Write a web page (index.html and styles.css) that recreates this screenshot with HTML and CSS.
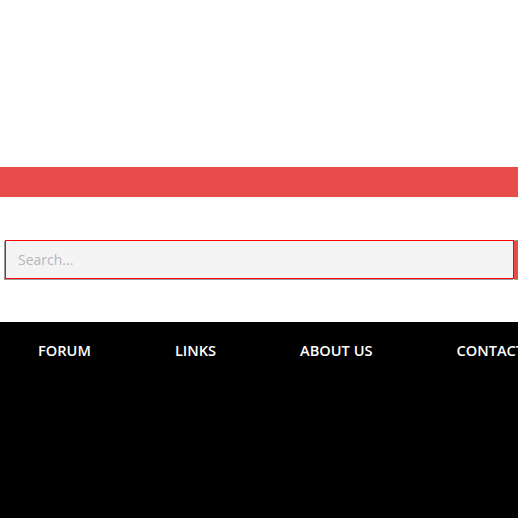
FILE: index.html
```html
<!DOCTYPE html>
<html>
<head>
<meta charset="utf-8">
<link rel="stylesheet" href="styles.css">
</head>
<body>
<header class="top"></header>
<div class="bar"></div>
<section class="search-area">
  <form class="search">
    <input class="search-input" type="text" placeholder="Search...">
    <button class="search-btn" type="button"></button>
  </form>
</section>
<footer class="footer">
  <nav class="nav">
    <a class="nav-link" href="#">FORUM</a>
    <a class="nav-link" href="#">LINKS</a>
    <a class="nav-link" href="#">ABOUT US</a>
    <a class="nav-link" href="#">CONTACT</a>
  </nav>
</footer>
</body>
</html>
```

FILE: styles.css
```css
html, body {
  margin: 0;
  padding: 0;
  background: #ffffff;
  overflow: hidden;
  font-family: "Open Sans", "Noto Sans", sans-serif;
}
.top {
  height: 167px;
}
.bar {
  height: 30px;
  background: #e84c4a;
}
.search-area {
  padding: 43px 0 42px 5px;
  height: 40px;
}
.search {
  display: flex;
  margin: 0;
}
.search-input {
  box-sizing: border-box;
  flex: 0 0 509px;
  height: 39px;
  margin: 0;
  border: 1px solid #ff0000;
  background: #f4f4f4;
  box-shadow: -1px 1px 0 #9a9a9a;
  padding: 0 0 0 12px;
  font-family: "Open Sans", "Noto Sans", sans-serif;
  font-size: 14px;
  outline: none;
}
.search-input::placeholder {
  color: #b4b6be;
}
.search-btn {
  box-sizing: border-box;
  flex: 0 0 4px;
  height: 40px;
  margin: 0;
  padding: 0;
  border: 0;
  border-top: 1px solid #9a9a9a;
  border-bottom: 1px solid #9a9a9a;
  background: #e84c4a;
}
.footer {
  height: 196px;
  background: #000000;
}
.nav {
  display: flex;
  gap: 84px;
  padding: 17px 0 0 38px;
  white-space: nowrap;
  overflow: hidden;
}
.nav-link {
  color: #ffffff;
  text-decoration: none;
  font-weight: 600;
  font-size: 14.6px;
  line-height: 22px;
}
```
